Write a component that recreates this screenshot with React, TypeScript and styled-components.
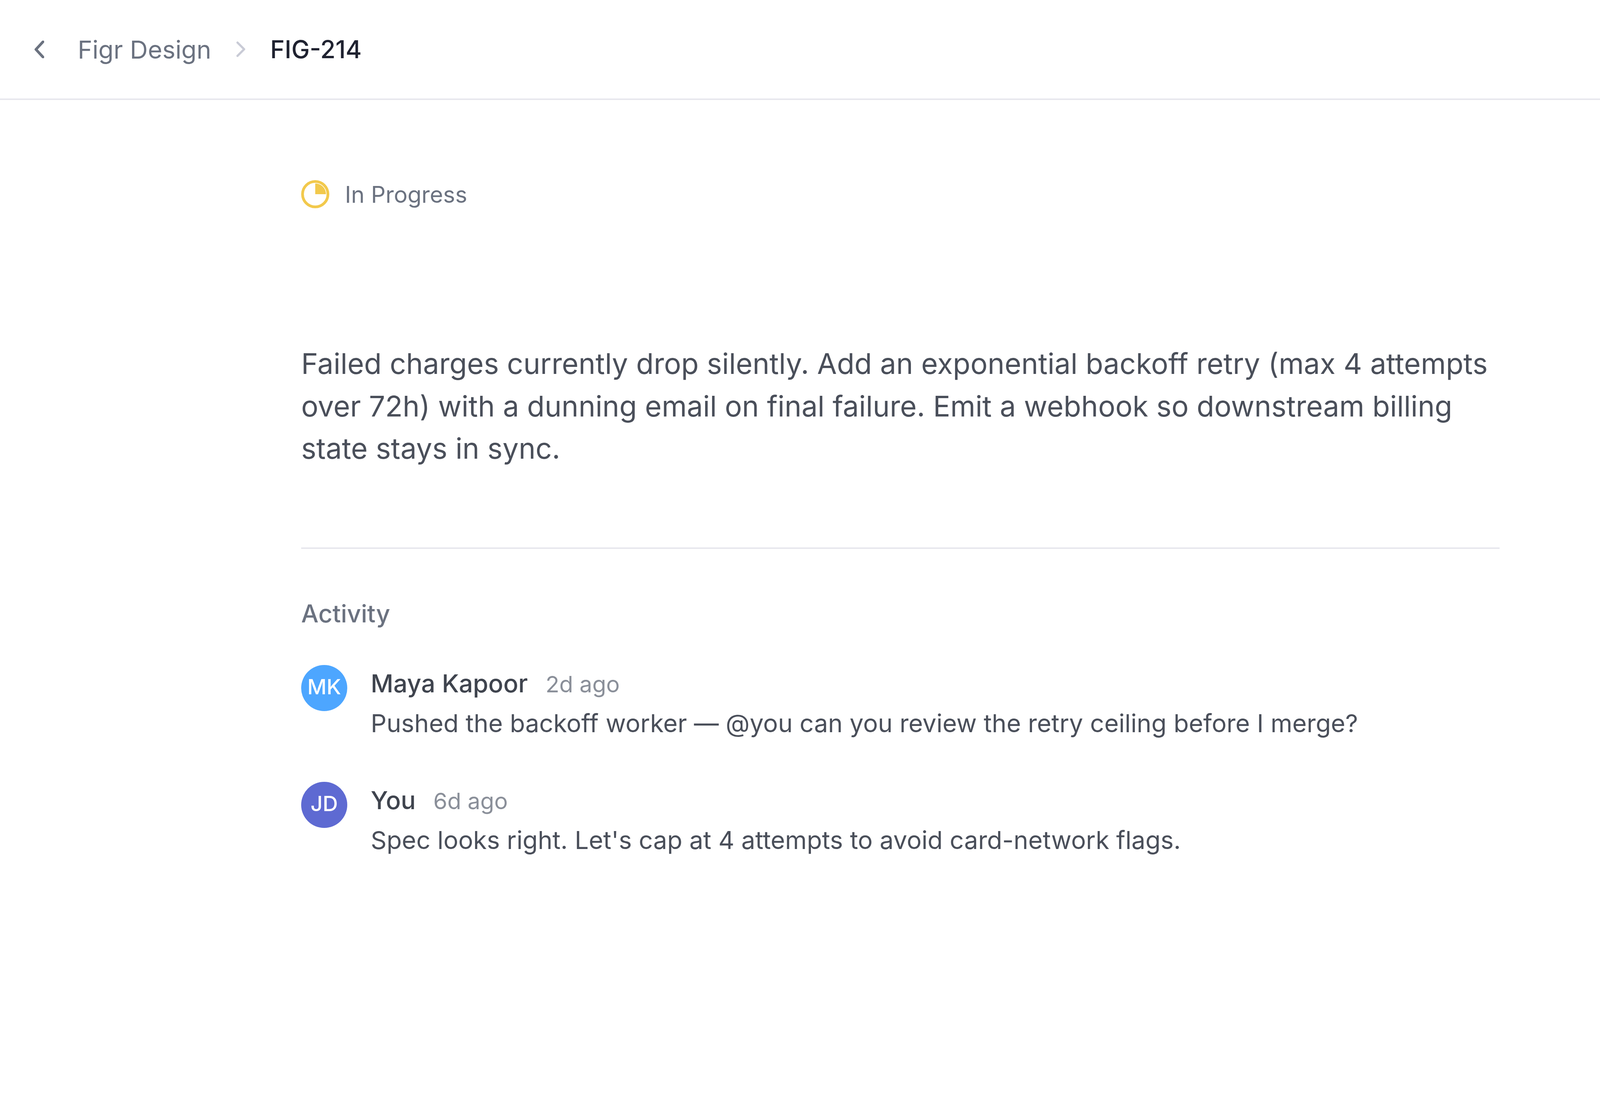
import styled, { createGlobalStyle } from "styled-components";

const comments = [
  {
    initials: "MK",
    color: "#4da6ff",
    name: "Maya Kapoor",
    time: "2d ago",
    text: "Pushed the backoff worker — @you can you review the retry ceiling before I merge?",
  },
  {
    initials: "JD",
    color: "#5e6ad2",
    name: "You",
    time: "6d ago",
    text: "Spec looks right. Let's cap at 4 attempts to avoid card-network flags.",
  },
];

const App = () => (
  <Page>
    <GlobalStyle />
    <Header>
      <BackIcon viewBox="0 0 25 45">
        <path d="M22 3 4 22.500 22 42" />
      </BackIcon>
      <Crumb>Figr Design</Crumb>
      <SeparatorIcon viewBox="0 0 23 40">
        <path d="M3 3 20 20 3 37" />
      </SeparatorIcon>
      <Current>FIG-214</Current>
    </Header>
    <Main>
      <Status>
        <svg width="72" height="72" viewBox="0 0 72 72">
          <circle cx="36" cy="36" r="32.500" fill="none" stroke="#f2c94c" strokeWidth="7" />
          <path d="M36 36V8.500A27.500 27.500 0 0 1 63.500 36Z" fill="#f2c94c" />
        </svg>
        <StatusLabel>In Progress</StatusLabel>
      </Status>
      <Description>
        Failed charges currently drop silently. Add an exponential backoff retry (max 4 attempts
        over 72h) with a dunning email on final failure. Emit a webhook so downstream billing state
        stays in sync.
      </Description>
      <Divider />
      <ActivityTitle>Activity</ActivityTitle>
      <CommentList>
        {comments.map((comment) => (
          <Comment key={comment.initials}>
            <Avatar $color={comment.color}>{comment.initials}</Avatar>
            <div>
              <CommentMeta>
                <Author>{comment.name}</Author>
                <Time>{comment.time}</Time>
              </CommentMeta>
              <CommentText>{comment.text}</CommentText>
            </div>
          </Comment>
        ))}
      </CommentList>
    </Main>
  </Page>
);

const GlobalStyle = createGlobalStyle`
  html, body {
    margin: 0;
    background: #ffffff;
  }
  * {
    box-sizing: border-box;
  }
`;

const Page = styled.div`
  width: 4200px;
  height: 2800px;
  background: #ffffff;
  font-family: Inter, "Liberation Sans", sans-serif;
`;

const Header = styled.header`
  display: flex;
  align-items: center;
  height: 256px;
  padding-left: 88px;
  border-bottom: 4px solid #e8e8ee;
`;

const BackIcon = styled.svg`
  width: 25px;
  height: 45px;
  margin-right: 86px;
  fill: none;
  stroke: #6b7280;
  stroke-width: 7;
  stroke-linecap: round;
  stroke-linejoin: round;
`;

const Crumb = styled.span`
  font-size: 63.500px;
  color: #6b7280;
`;

const SeparatorIcon = styled.svg`
  width: 23px;
  height: 40px;
  margin: 0 64px;
  fill: none;
  stroke: #c9cbd6;
  stroke-width: 5.500;
  stroke-linecap: round;
  stroke-linejoin: round;
`;

const Current = styled.span`
  font-size: 62.800px;
  font-weight: 500;
  color: #1f2230;
`;

const Main = styled.main`
  width: 3068px;
  margin-left: 771px;
  padding-top: 205px;
`;

const Status = styled.div`
  display: flex;
  align-items: center;
  gap: 40px;
`;

const StatusLabel = styled.span`
  font-size: 58.500px;
  color: #6b7280;
`;

const Description = styled.p`
  margin: 344px 0 198px;
  font-size: 73.400px;
  line-height: 108.500px;
  color: #4a4f5a;
`;

const Divider = styled.hr`
  height: 4px;
  margin: 0 0 123px;
  border: 0;
  background: #e8e8ee;
`;

const ActivityTitle = styled.h2`
  margin: 0 0 90px;
  font-size: 62.700px;
  font-weight: 500;
  line-height: 84px;
  color: #6b7280;
`;

const CommentList = styled.div`
  display: flex;
  flex-direction: column;
  gap: 100px;
`;

const Comment = styled.div`
  display: flex;
  gap: 60px;
`;

const Avatar = styled.div<{ $color: string }>`
  display: flex;
  flex: none;
  align-items: center;
  justify-content: center;
  width: 118px;
  height: 118px;
  padding-bottom: 6px;
  border-radius: 50%;
  background: ${(props) => props.$color};
  font-size: 54px;
  font-weight: 500;
  color: #ffffff;
`;

const CommentMeta = styled.div`
  display: flex;
  align-items: baseline;
  gap: 45px;
  height: 94px;
  line-height: 94px;
`;

const Author = styled.span`
  font-size: 63.500px;
  font-weight: 500;
  color: #3f444e;
`;

const Time = styled.span`
  font-size: 58px;
  color: #8a8f99;
`;

const CommentText = styled.div`
  margin-top: 5px;
  font-size: 63.500px;
  line-height: 100px;
  color: #4a4f5a;
`;

export default App;
